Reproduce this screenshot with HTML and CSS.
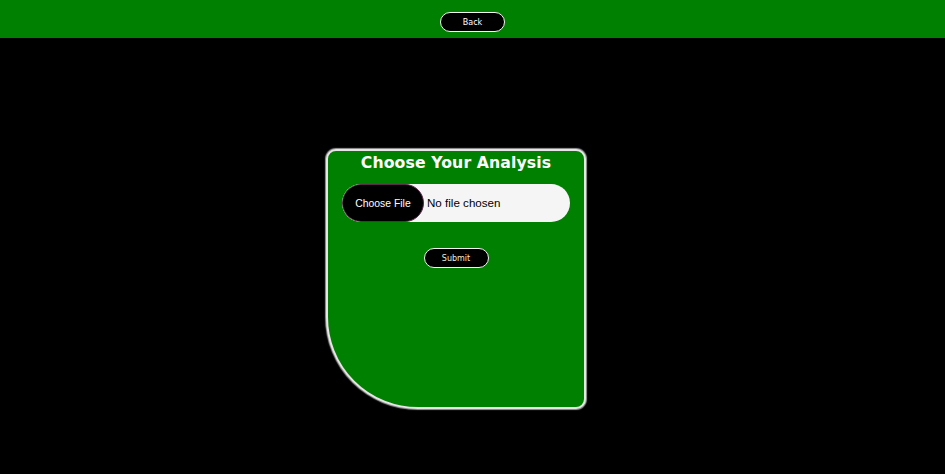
FILE: index.html
```html
<!DOCTYPE html>
<html>
<head>
<meta charset="utf-8">
<link rel="stylesheet" href="styles.css">
</head>
<body>
<header class="topbar">
  <button class="pill-btn back-btn">Back</button>
</header>
<main class="stage">
  <form class="card">
    <h1 class="card-title">Choose Your Analysis</h1>
    <input class="file-input" type="file">
    <button class="pill-btn submit-btn" type="button">Submit</button>
  </form>
</main>
</body>
</html>
```
FILE: styles.css
```css
html, body {
  margin: 0;
  padding: 0;
  background: #000;
  height: 100%;
}
body {
  font-family: "DejaVu Sans", Verdana, sans-serif;
}
.topbar {
  height: 38px;
  background: #008000;
  display: flex;
  justify-content: center;
  align-items: flex-start;
  padding-top: 12px;
  box-sizing: border-box;
}
.pill-btn {
  background: #000;
  border: 1.5px solid #f2f2f2;
  border-radius: 10px;
  font-family: "DejaVu Sans", Verdana, sans-serif;
  font-size: 8px;
  padding: 0;
  cursor: pointer;
}
.back-btn {
  width: 65px;
  height: 20px;
  color: #fff;
}
.stage {
  display: flex;
  justify-content: center;
  padding-top: 111px;
  padding-right: 33px;
}
.card {
  width: 260px;
  height: 260px;
  box-sizing: border-box;
  background: #008000;
  border: 2.5px solid #e6e6e6;
  box-shadow: 0 0 1px 1px #9a9a9a;
  border-radius: 10px 10px 10px 92px;
  display: flex;
  flex-direction: column;
  align-items: center;
  padding-top: 2px;
}
.card-title {
  margin: 0;
  color: #fff;
  font-size: 15.7px;
  font-weight: bold;
  line-height: 20px;
  letter-spacing: 0.1px;
}
.file-input {
  margin-top: 11px;
  width: 228px;
  height: 38px;
  box-sizing: border-box;
  background: #f5f5f5;
  border-radius: 19px;
  font-family: "Liberation Sans", Arial, sans-serif;
  font-size: 11.6px;
  color: #000;
  padding: 0;
}
.file-input::file-selector-button {
  width: 82px;
  height: 38px;
  background: #000;
  color: #fff;
  border: 1px solid #5a2a4a;
  border-radius: 19px;
  font-family: "Liberation Sans", Arial, sans-serif;
  font-size: 10.4px;
  margin-right: 3px;
  padding: 0;
  cursor: pointer;
}
.submit-btn {
  margin-top: 26px;
  width: 65px;
  height: 20px;
  color: #f2ead0;
}
```
